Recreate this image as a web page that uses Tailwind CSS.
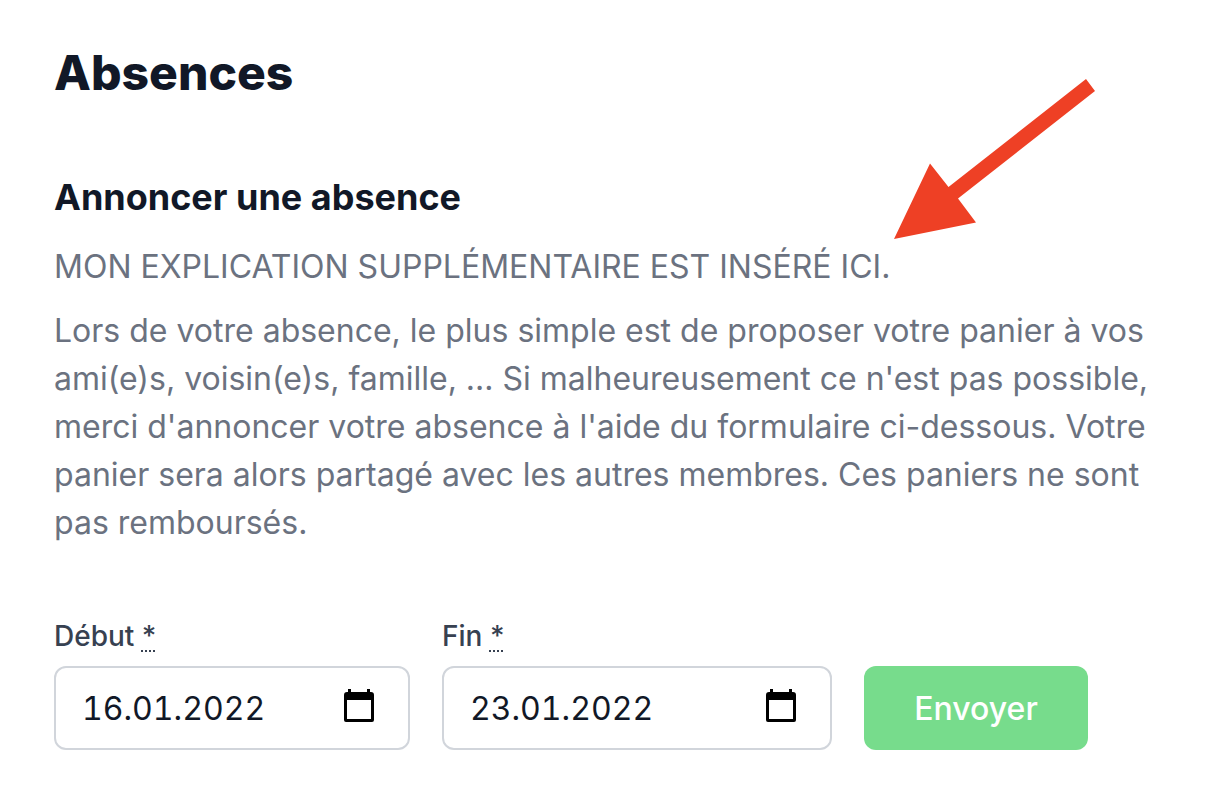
<!DOCTYPE html>
<html lang="fr">
<head>
<meta charset="utf-8">
<title>Absences</title>
<script src="https://cdn.jsdelivr.net/npm/@tailwindcss/browser@4"></script>
</head>
<body class="bg-white font-['Inter',sans-serif] text-gray-900">
<main class="relative px-[54px] pt-[41px] pb-14">
  <h1 class="text-[48px] leading-[64px] font-extrabold text-[#111827]">Absences</h1>
  <section class="mt-16">
    <h2 class="text-[36px] leading-[56px] font-bold text-[#111827]">Annoncer une absence</h2>
    <div class="mt-[18px] text-[32px] leading-[48px] text-[#6b7280]">
      <p>MON EXPLICATION SUPPLÉMENTAIRE EST INSÉRÉ ICI.</p>
      <p class="mt-4">Lors de votre absence, le plus simple est de proposer votre panier à vos ami(e)s, voisin(e)s, famille, ... Si malheureusement ce n'est pas possible, merci d'annoncer votre absence à l'aide du formulaire ci-dessous. Votre panier sera alors partagé avec les autres membres. Ces paniers ne sont pas remboursés.</p>
    </div>
    <form class="mt-[69px] flex items-end gap-8">
      <div class="w-[356px]">
        <label for="start" class="block text-[28px] leading-[40px] font-medium text-[#374151]">Début <abbr title="obligatoire" class="decoration-2 underline-offset-4">*</abbr></label>
        <div class="mt-[10px] flex h-[84px] items-center rounded-xl border-2 border-[#d1d5db] pr-[34px] pl-[26px]">
          <input id="start" type="text" value="16.01.2022" class="w-full min-w-0 bg-transparent pt-[2px] text-[32px] leading-[48px] text-[#111827] tabular-nums outline-none">
          <svg class="mb-1 h-[34px] w-[30px] shrink-0" viewBox="0 0 30 34" aria-hidden="true"><path fill="#000" fill-rule="evenodd" d="M4 0h3v3h16V0h3v3h1q3 0 3 3v25q0 2-2 2H2q-2 0-2-2V6q0-3 3-3h1zM3 11v19h24V11z"/></svg>
        </div>
      </div>
      <div class="w-[390px]">
        <label for="end" class="block text-[28px] leading-[40px] font-medium text-[#374151]">Fin <abbr title="obligatoire" class="decoration-2 underline-offset-4">*</abbr></label>
        <div class="mt-[10px] flex h-[84px] items-center rounded-xl border-2 border-[#d1d5db] pr-[34px] pl-[26px]">
          <input id="end" type="text" value="23.01.2022" class="w-full min-w-0 bg-transparent pt-[2px] text-[32px] leading-[48px] text-[#111827] tabular-nums outline-none">
          <svg class="mb-1 h-[34px] w-[30px] shrink-0" viewBox="0 0 30 34" aria-hidden="true"><path fill="#000" fill-rule="evenodd" d="M4 0h3v3h16V0h3v3h1q3 0 3 3v25q0 2-2 2H2q-2 0-2-2V6q0-3 3-3h1zM3 11v19h24V11z"/></svg>
        </div>
      </div>
      <button type="submit" class="h-[84px] w-[224px] rounded-xl bg-[#77dc8c] pt-[2px] text-[32px] leading-[48px] font-medium text-white">Envoyer</button>
    </form>
  </section>
  <svg class="absolute top-[79px] left-[894px] h-[160px] w-[202px]" viewBox="894 79 202 160" aria-hidden="true"><path fill="#ee4025" d="M894 239 930 163.500 948.500 187 1086 79 1095 91 958 198.500 976 222.500Z"/></svg>
</main>
</body>
</html>
